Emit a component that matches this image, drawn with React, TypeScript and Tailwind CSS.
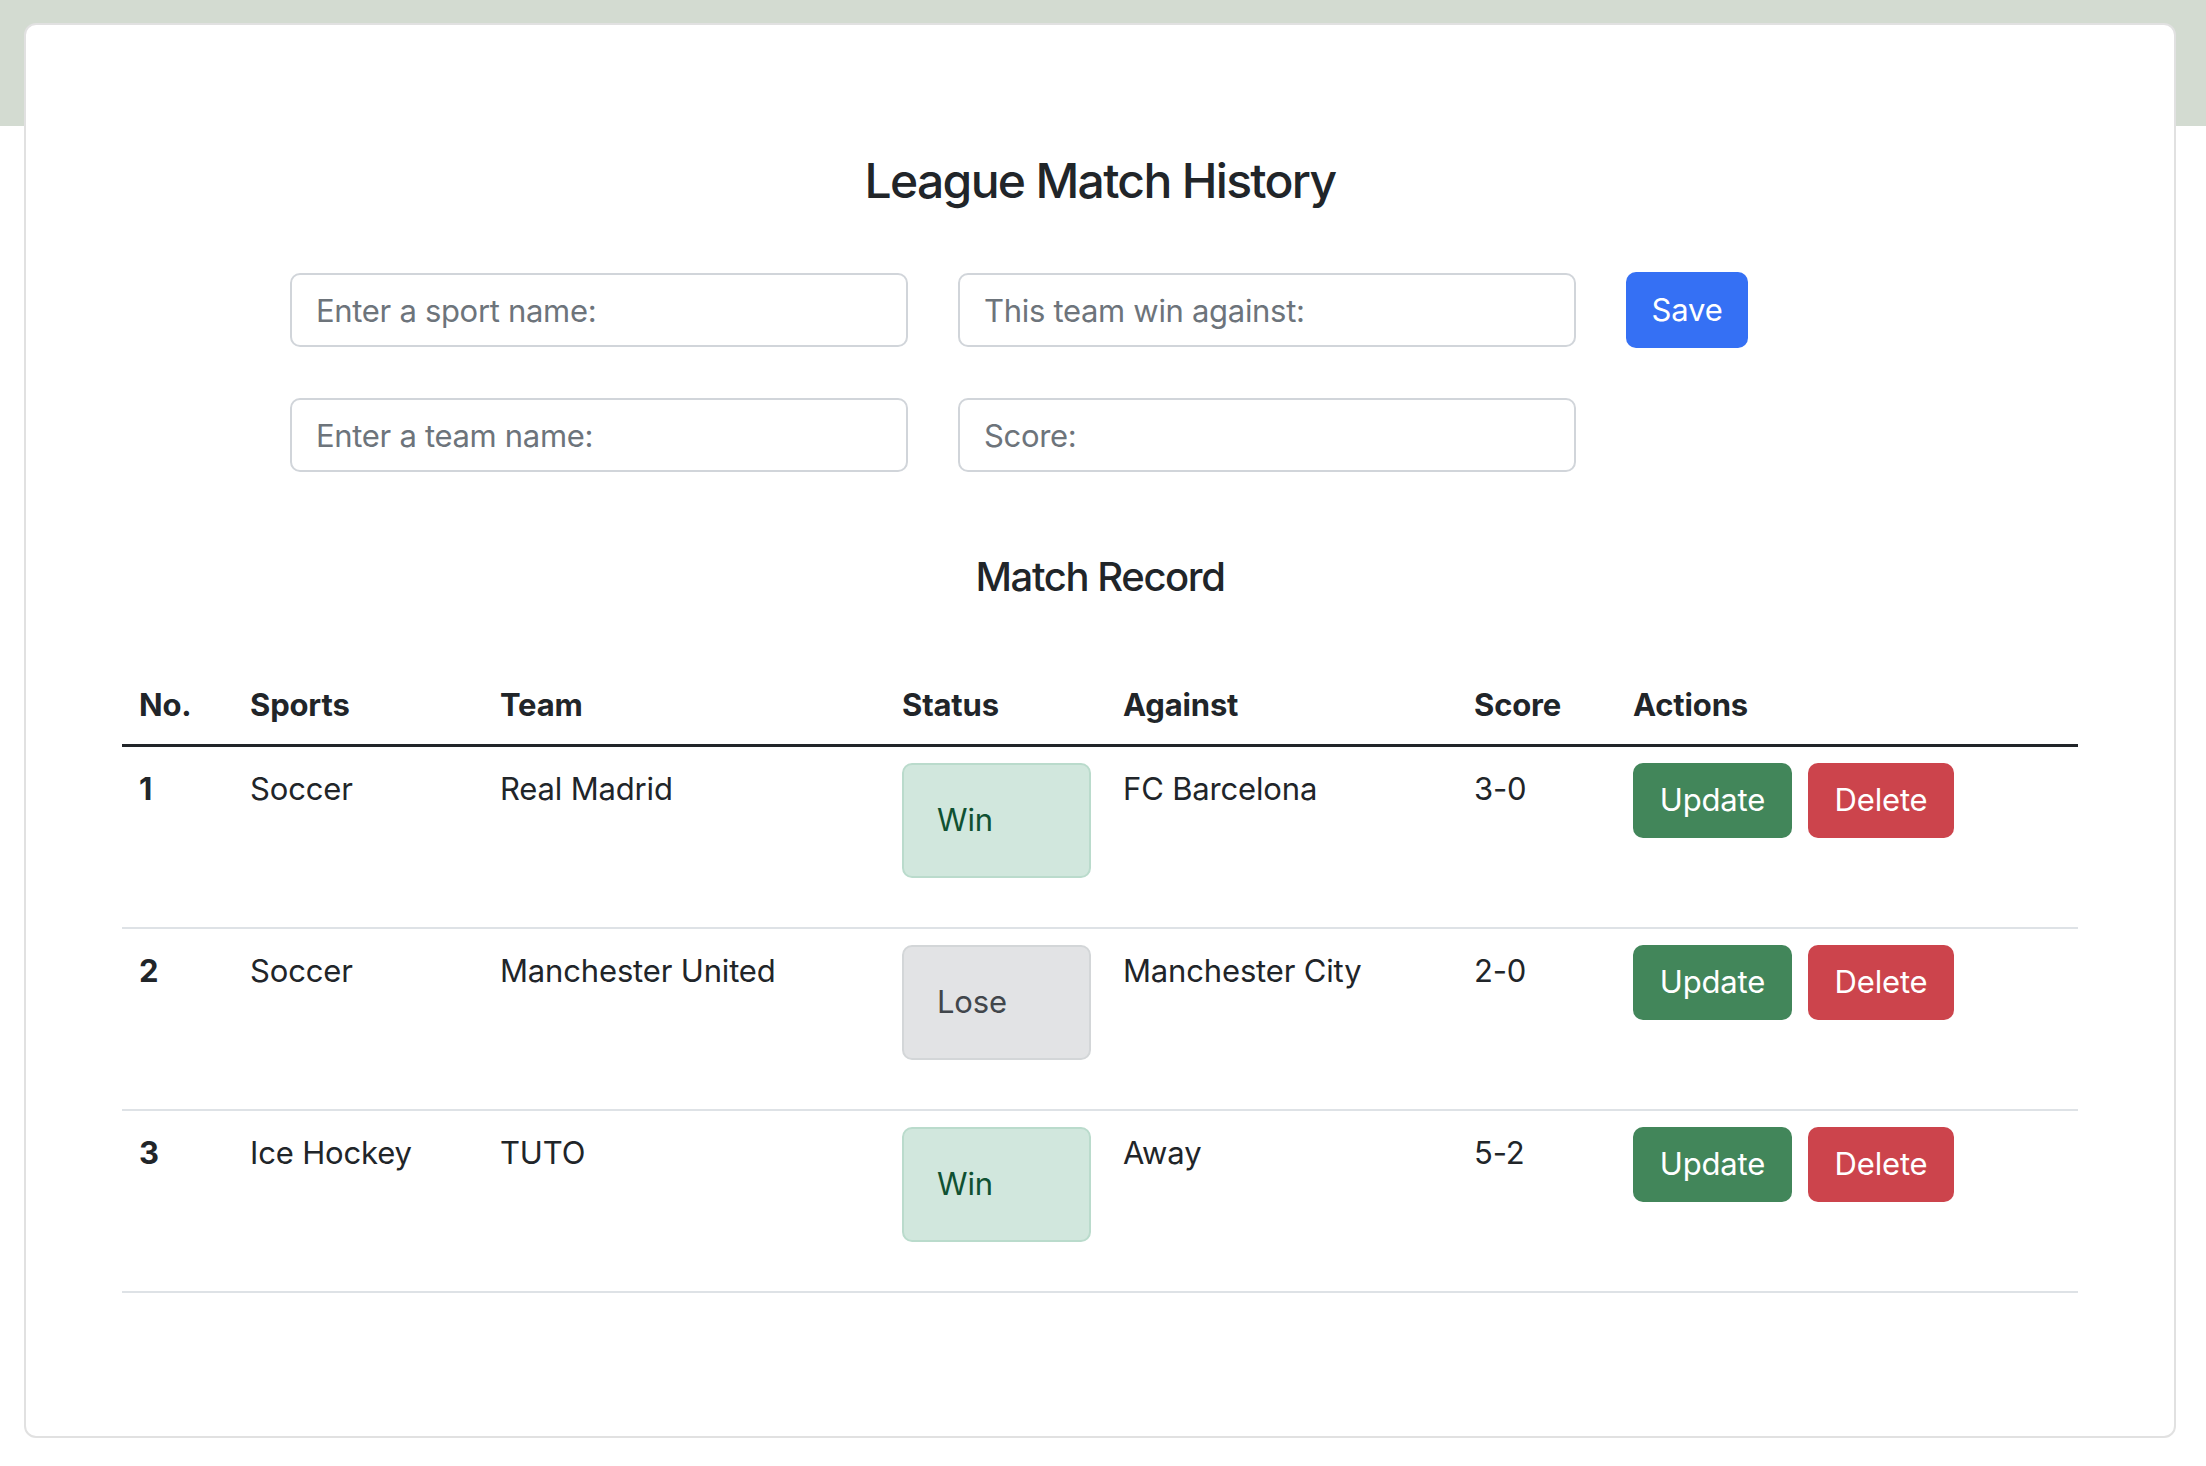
import React from "react";

interface MatchRow {
  no: number;
  sport: string;
  team: string;
  status: "Win" | "Lose";
  against: string;
  score: string;
}

const matches: MatchRow[] = [
  { no: 1, sport: "Soccer", team: "Real Madrid", status: "Win", against: "FC Barcelona", score: "3-0" },
  { no: 2, sport: "Soccer", team: "Manchester United", status: "Lose", against: "Manchester City", score: "2-0" },
  { no: 3, sport: "Ice Hockey", team: "TUTO", status: "Win", against: "Away", score: "5-2" },
];

const font = { fontFamily: "Inter, 'Noto Sans', sans-serif" };

export default function App() {
  return (
    <div
      className="min-h-screen bg-[linear-gradient(to_bottom,#d3dbd1_126px,#ffffff_126px)] pt-[23px] pb-[29px] text-[#212529] tracking-[-0.01em]"
      style={font}
    >
      {/* Card */}
      <div className="ml-[24px] w-[2152px] bg-white border-2 border-[#e1e1e1] rounded-[12px] px-[96px] pt-[127px] pb-[143px]">
        <h1 className="text-center text-[48px] leading-[58px] font-medium tracking-[-0.035em]">
          League Match History
        </h1>

        {/* Form */}
        <div className="mt-[63px] ml-[168px] grid grid-cols-[618px_618px_122px] gap-x-[50px] gap-y-[50px]">
          <input
            placeholder="Enter a sport name:"
            className="h-[74px] border-2 border-[#d1d5da] rounded-[10px] px-[24px] text-[31px] tracking-[-0.01em] outline-none placeholder:text-[#6d747b]"
          />
          <input
            placeholder="This team win against:"
            className="h-[74px] border-2 border-[#d1d5da] rounded-[10px] px-[24px] text-[31px] tracking-[-0.01em] outline-none placeholder:text-[#6d747b]"
          />
          <button className="h-[76px] -mt-[1px] rounded-[10px] bg-[#3570f4] text-white text-[31px]">
            Save
          </button>
          <input
            placeholder="Enter a team name:"
            className="h-[74px] border-2 border-[#d1d5da] rounded-[10px] px-[24px] text-[31px] tracking-[-0.01em] outline-none placeholder:text-[#6d747b]"
          />
          <input
            placeholder="Score:"
            className="h-[74px] border-2 border-[#d1d5da] rounded-[10px] px-[24px] text-[31px] tracking-[-0.01em] outline-none placeholder:text-[#6d747b]"
          />
        </div>

        <h2 className="mt-[81px] text-center text-[40px] leading-[48px] font-medium tracking-[-0.035em]">
          Match Record
        </h2>

        {/* Table */}
        <table className="mt-[65px] w-full table-fixed text-[31px] text-left">
          <thead>
            <tr className="border-b-[3px] border-[#212529]">
              <th className="w-[112px] px-[17px] py-[16px] leading-[46px] font-bold">No.</th>
              <th className="w-[250px] px-[16px] py-[16px] leading-[46px] font-bold">Sports</th>
              <th className="w-[402px] px-[16px] py-[16px] leading-[46px] font-bold">Team</th>
              <th className="w-[221px] px-[16px] py-[16px] leading-[46px] font-bold">Status</th>
              <th className="w-[351px] px-[16px] py-[16px] leading-[46px] font-bold">Against</th>
              <th className="w-[159px] px-[16px] py-[16px] leading-[46px] font-bold">Score</th>
              <th className="px-[16px] py-[16px] leading-[46px] font-bold">Actions</th>
            </tr>
          </thead>
          <tbody>
            {matches.map((m) => (
              <tr key={m.no} className="border-b-2 border-[#dee2e6] align-top">
                <td className="px-[17px] py-[16px] leading-[51px] font-bold">{m.no}</td>
                <td className="px-[16px] py-[16px] leading-[51px]">{m.sport}</td>
                <td className="px-[16px] py-[16px] leading-[51px]">{m.team}</td>
                <td className="px-[16px] py-[16px]">
                  {m.status === "Win" ? (
                    <div className="h-[115px] mb-[33px] flex items-center pl-[33px] border-2 border-[#badbcc] bg-[#d1e7dd] text-[#0f5132] rounded-[10px]">
                      Win
                    </div>
                  ) : (
                    <div className="h-[115px] mb-[33px] flex items-center pl-[33px] border-2 border-[#d3d6d8] bg-[#e2e3e5] text-[#41464b] rounded-[10px]">
                      Lose
                    </div>
                  )}
                </td>
                <td className="px-[16px] py-[16px] leading-[51px]">{m.against}</td>
                <td className="px-[16px] py-[16px] leading-[51px]">{m.score}</td>
                <td className="px-[16px] py-[16px]">
                  <div className="flex gap-[16px]">
                    <button className="w-[159px] h-[75px] rounded-[10px] bg-[#42865a] text-white">
                      Update
                    </button>
                    <button className="w-[146px] h-[75px] rounded-[10px] bg-[#cc444c] text-white">
                      Delete
                    </button>
                  </div>
                </td>
              </tr>
            ))}
          </tbody>
        </table>
      </div>
    </div>
  );
}
